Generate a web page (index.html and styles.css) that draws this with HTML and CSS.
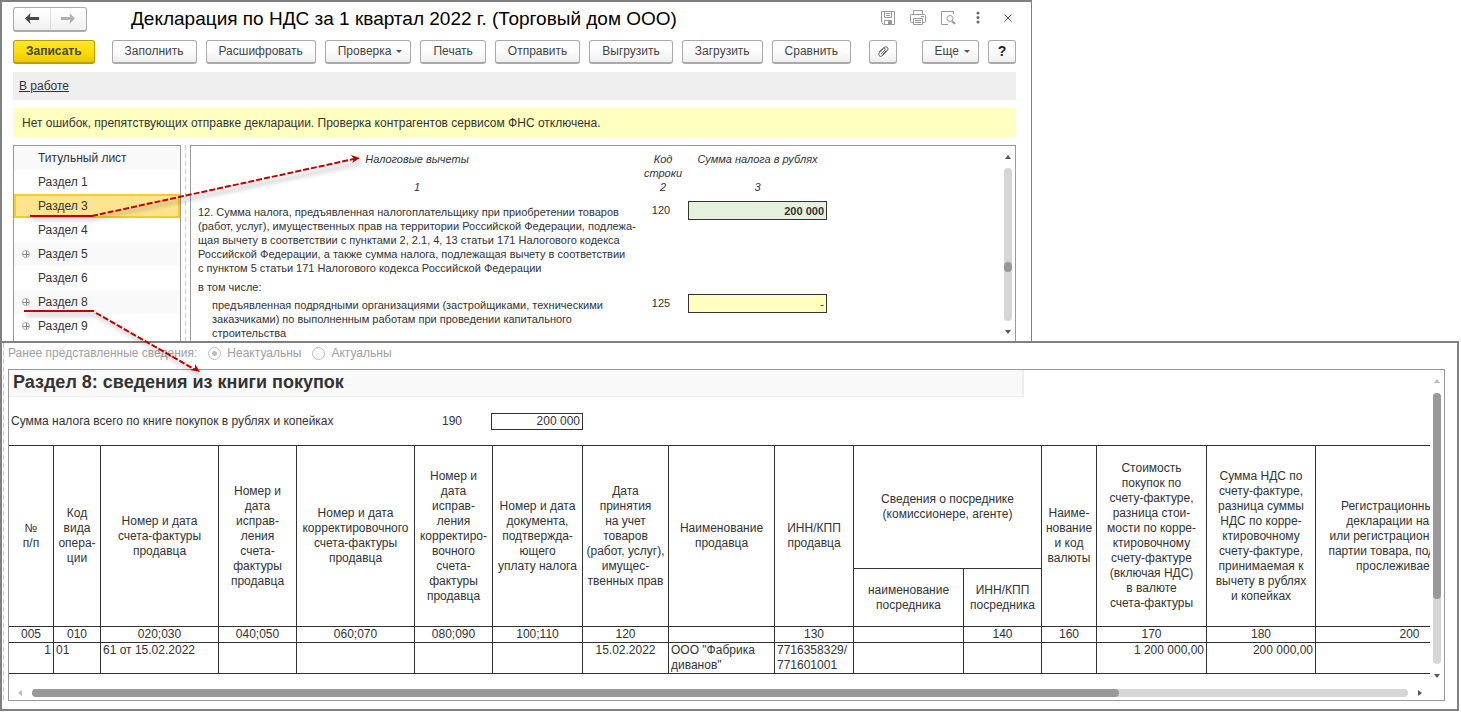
FILE: index.html
```html
<!DOCTYPE html>
<html lang="ru">
<head>
<meta charset="utf-8">
<title>Декларация по НДС</title>
<link rel="stylesheet" href="styles.css">
</head>
<body>
<main class="stage">
<section class="window declaration">
  <header class="titlebar">
    <div class="history">
      <button type="button" aria-label="Назад"><svg width="14" height="11" viewBox="0 0 14 11"><path d="M0 5.500 5.500 0 4.800 4H14v3H4.800l.7 4z" fill="#4a4a4a"/></svg></button>
      <button type="button" aria-label="Вперед"><svg width="14" height="11" viewBox="0 0 14 11"><path d="M14 5.500 8.500 0l.7 4H0v3h9.200l-.7 4z" fill="#b0b0b0"/></svg></button>
    </div>
    <h1>Декларация по НДС за 1 квартал 2022 г. (Торговый дом ООО)</h1>
    <div class="tools">
      <button type="button" aria-label="Сохранить"><svg width="16" height="16" viewBox="0 0 16 16" fill="none" stroke="#999"><path d="M1.500 1.500h13v13h-11l-2-2zM4.500 1.500v6h7v-6M6 3.500h4M6 5.500h4M4.500 14.500v-4h7v4"/><path d="M8 11h3v3H8z" fill="#999" stroke="none"/></svg></button>
      <button type="button" aria-label="Печать"><svg width="16" height="16" viewBox="0 0 16 16" fill="none" stroke="#999"><path d="M3.500 4.500v-4h9v4M3.500 12.500h-2q-1 0-1-1v-6q0-1 1-1h13q1 0 1 1v6q0 1-1 1h-2M3.500 8.500h9v6h-9zM5 10.500h6M5 12.500h6M11 6.500h3"/></svg></button>
      <button type="button" aria-label="Предварительный просмотр"><svg width="16" height="16" viewBox="0 0 16 16" fill="none" stroke="#999"><path d="M13.500 4V1.500h-12v13H8"/><circle cx="10" cy="8.500" r="3"/><path d="m12 11 3 3" stroke-width="2"/></svg></button>
      <button type="button" aria-label="Меню"><svg width="16" height="16" viewBox="0 0 16 16" fill="#666"><circle cx="8" cy="3" r="1.500"/><circle cx="8" cy="7.500" r="1.500"/><circle cx="8" cy="12" r="1.500"/></svg></button>
      <button type="button" aria-label="Закрыть"><svg width="16" height="16" viewBox="0 0 16 16" fill="none" stroke="#555"><path d="m4.500 4.500 7 7m0-7-7 7"/></svg></button>
    </div>
  </header>
  <div class="toolbar">
    <button type="button" class="btn primary">Записать</button>
    <button type="button" class="btn">Заполнить</button>
    <button type="button" class="btn">Расшифровать</button>
    <button type="button" class="btn menu">Проверка<span class="caret"></span></button>
    <button type="button" class="btn">Печать</button>
    <button type="button" class="btn">Отправить</button>
    <button type="button" class="btn">Выгрузить</button>
    <button type="button" class="btn">Загрузить</button>
    <button type="button" class="btn">Сравнить</button>
    <button type="button" class="btn square attach" aria-label="Файлы"><svg width="12" height="12" viewBox="0 0 12 12" fill="none" stroke="#666"><path d="m4 8 4-4q1-1 0-1.500t-1.500 0L2.500 6.500q-1.500 1.500-.5 3t3 .5L10 5q2-2 .5-3.500T7 1.500L2 6M5.500 8.500l4-4"/></svg></button>
    <button type="button" class="btn menu more">Еще<span class="caret"></span></button>
    <button type="button" class="btn square help">?</button>
  </div>
  <div class="status"><a href="#">В работе</a></div>
  <div class="notice">Нет ошибок, препятствующих отправке декларации. Проверка контрагентов сервисом ФНС отключена.</div>
  <div class="workspace">
    <nav class="sections">
      <ul>
        <li>Титульный лист</li>
        <li>Раздел 1</li>
        <li class="current">Раздел 3</li>
        <li>Раздел 4</li>
        <li class="group">Раздел 5</li>
        <li>Раздел 6</li>
        <li class="group">Раздел 8</li>
        <li class="group">Раздел 9</li>
      </ul>
    </nav>
    <div class="splitter"></div>
    <div class="sheet">
      <table class="deductions">
        <colgroup><col class="d-name"><col class="d-code"><col class="d-sum"></colgroup>
        <thead>
          <tr><th>Налоговые вычеты</th><th>Код<br>строки</th><th>Сумма налога в рублях</th></tr>
          <tr class="numbers"><th>1</th><th>2</th><th>3</th></tr>
        </thead>
        <tbody>
          <tr><td class="desc">12. Сумма налога, предъявленная налогоплательщику при приобретении товаров<br>(работ, услуг), имущественных прав на территории Российской Федерации, подлежа-<br>щая вычету в соответствии с пунктами 2, 2.1, 4, 13 статьи 171 Налогового кодекса<br>Российской Федерации, а также сумма налога, подлежащая вычету в соответствии<br>с пунктом 5 статьи 171 Налогового кодекса Российской Федерации</td><td class="code">120</td><td><input class="amount total" value="200 000" aria-label="Сумма по строке 120"></td></tr>
          <tr class="including"><td class="desc">в том числе:</td><td></td><td></td></tr>
          <tr><td class="desc nested">предъявленная подрядными организациями (застройщиками, техническими<br>заказчиками) по выполненным работам при проведении капитального<br>строительства</td><td class="code">125</td><td><input class="amount" value="-" aria-label="Сумма по строке 125"></td></tr>
        </tbody>
      </table>
      <div class="vbar"><i class="up"></i><div class="track"><div class="thumb middle"></div></div><i class="down"></i></div>
    </div>
  </div>
</section>

<section class="window purchases">
  <div class="splitter"></div>
  <div class="content">
    <div class="relevance" role="radiogroup">
      <span>Ранее представленные сведения:</span>
      <label><input type="radio" name="rel" checked disabled>Неактуальны</label>
      <label><input type="radio" name="rel" disabled>Актуальны</label>
    </div>
    <div class="book">
      <div class="view">
        <h2>Раздел 8: сведения из книги покупок</h2>
        <div class="summary">
          <label for="total">Сумма налога всего по книге покупок в рублях и копейках</label>
          <span>190</span>
          <input id="total" value="200 000">
        </div>
        <table class="ledger">
          <colgroup><col class="w45"><col class="w47"><col class="w118"><col class="w78"><col class="w118"><col class="w78"><col class="w90"><col class="w86"><col class="w106"><col class="w79"><col class="w110"><col class="w78"><col class="w55"><col class="w110"><col class="w109"><col class="w188"></colgroup>
          <thead>
            <tr class="main">
              <th rowspan="2">№<br>п/п</th>
              <th rowspan="2">Код<br>вида<br>опера-<br>ции</th>
              <th rowspan="2">Номер и дата<br>счета-фактуры<br>продавца</th>
              <th rowspan="2">Номер и<br>дата<br>исправ-<br>ления<br>счета-<br>фактуры<br>продавца</th>
              <th rowspan="2">Номер и дата<br>корректировочного<br>счета-фактуры<br>продавца</th>
              <th rowspan="2">Номер и<br>дата<br>исправ-<br>ления<br>корректиро-<br>вочного<br>счета-<br>фактуры<br>продавца</th>
              <th rowspan="2">Номер и дата<br>документа,<br>подтвержда-<br>ющего<br>уплату налога</th>
              <th rowspan="2">Дата<br>принятия<br>на учет<br>товаров<br>(работ, услуг),<br>имущес-<br>твенных прав</th>
              <th rowspan="2">Наименование<br>продавца</th>
              <th rowspan="2">ИНН/КПП<br>продавца</th>
              <th colspan="2">Сведения о посреднике<br>(комиссионере, агенте)</th>
              <th rowspan="2">Наиме-<br>нование<br>и код<br>валюты</th>
              <th rowspan="2">Стоимость<br>покупок по<br>счету-фактуре,<br>разница стои-<br>мости по корре-<br>ктировочному<br>счету-фактуре<br>(включая НДС)<br>в валюте<br>счета-фактуры</th>
              <th rowspan="2">Сумма НДС по<br>счету-фактуре,<br>разница суммы<br>НДС по корре-<br>ктировочному<br>счету-фактуре,<br>принимаемая к<br>вычету в рублях<br>и копейках</th>
              <th rowspan="2">Регистрационный номер<br>декларации на товары<br>или регистрационный номер<br>партии товара, подлежащего<br>прослеживаемости</th>
            </tr>
            <tr class="sub"><th>наименование<br>посредника</th><th>ИНН/КПП<br>посредника</th></tr>
            <tr class="codes"><th>005</th><th>010</th><th>020;030</th><th>040;050</th><th>060;070</th><th>080;090</th><th>100;110</th><th>120</th><th></th><th>130</th><th></th><th>140</th><th>160</th><th>170</th><th>180</th><th>200</th></tr>
          </thead>
          <tbody>
            <tr><td class="num">1</td><td>01</td><td>61 от 15.02.2022</td><td></td><td></td><td></td><td></td><td class="mid">15.02.2022</td><td>ООО "Фабрика<br>диванов"</td><td>7716358329/<br>771601001</td><td></td><td></td><td></td><td class="num">1 200 000,00</td><td class="num">200 000,00</td><td></td></tr>
          </tbody>
        </table>
      </div>
      <div class="vbar"><i class="up off"></i><div class="track"><div class="thumb tall"></div></div><i class="down"></i></div>
      <div class="hbar"><i class="left off"></i><div class="track"><div class="thumb wide"></div></div><i class="right"></i></div>
    </div>
  </div>
</section>

<svg class="callouts" width="400" height="400" viewBox="0 0 400 400" fill="none" aria-hidden="true">
  <g class="shadow"><path d="M32 219h62L362 163M26 315h70l104 60"/></g>
  <g stroke="#c00000" stroke-width="2">
    <path d="M30 216h62M24 311h70"/>
    <path d="M92 216 354 159M96 313l98 56" stroke-dasharray="6 2"/>
  </g>
  <path d="m360 158-9-3 3 4-2 4zM200 372l-5-8v4l-5 2z" fill="#c00000"/>
</svg>
</main>
</body>
</html>
```
FILE: styles.css
```css
*, ::before { box-sizing: border-box; }
body { margin: 0; background: #fff; color: #333; font: 12px/15px "Liberation Sans", Arial, sans-serif; }
button, input { font: inherit; color: inherit; margin: 0; }
h1, h2, ul { margin: 0; padding: 0; }
th { font-weight: normal; }
.stage { position: relative; padding-right: 2px; }
.window { border: 2px solid #808080; background: #fff; }

.declaration { margin-right: 427px; border-right-width: 1px; border-bottom: 0; padding: 4px 15px 0 11px; }
.titlebar { display: flex; align-items: center; height: 26px; }
.history { display: flex; width: 74px; height: 25px; border: 1px solid #aaa; border-bottom: 2px solid #aaa; border-radius: 3px; background: linear-gradient(#fff, #f0f0f0); }
.history button { flex: 1; display: grid; place-items: center; border: 0; padding: 0; background: none; }
.history button + button { border-left: 1px solid #ddd; }
h1 { flex: 1; padding-left: 44px; color: #000; font-size: 19px; line-height: 24px; font-weight: normal; white-space: nowrap; }
.tools { display: flex; gap: 14px; }
.tools button { border: 0; padding: 0; background: none; width: 16px; height: 18px; display: grid; }

.toolbar { display: flex; gap: 9px; margin-top: 8px; }
.btn { height: 24px; padding: 0 12px; color: #444; border: 1px solid #aaa; border-bottom: 2px solid #aaa; border-radius: 3px; background: linear-gradient(#fff 40%, #eee); display: flex; align-items: center; justify-content: center; white-space: nowrap; }
.primary { padding: 0 12px; font-weight: bold; margin-right: 8px; border-color: #b89c00; background: linear-gradient(#ffe536, #ffdf00 50%, #e9c900); }
.menu { padding: 0 8px 0 12px; }
.square { width: 28px; padding: 0; }
.attach { margin-left: 9px; }
.more { margin-left: auto; }
.help { font-weight: bold; color: #222; font-size: 14px; }
.caret { margin-left: 5px; border: 3px solid transparent; border-top-color: #555; border-bottom: 0; }

.status { height: 28px; margin-top: 8px; padding: 7px 6px; background: #efefef; }
.status a { color: #333; }
.notice { height: 29px; margin-top: 8px; padding: 8px 9px; background: #ffffc0; white-space: nowrap; overflow: hidden; }

.workspace { display: flex; margin-top: 8px; }
.sections { width: 168px; border: 1px solid #999; border-bottom: 0; padding-bottom: 3px; }
.sections ul { list-style: none; }
.sections li { display: flex; align-items: center; height: 24px; padding-left: 24px; background: #fff; }
.sections li:nth-child(odd) { background: #f9f9f9; }
.sections .group { padding-left: 8px; }
.group::before { content: ""; width: 8px; height: 8px; margin-right: 8px; border: 1px solid #aaa; border-radius: 50%; background: linear-gradient(#888, #888) center / 6px 1px no-repeat, linear-gradient(#888, #888) center / 1px 6px no-repeat; }
.sections li.current { padding-left: 22px; border: 2px solid #ffc91e; background: #ffe48f; }
.splitter { width: 1px; background: repeating-linear-gradient(#ccc 0 5px, transparent 5px 8px); }
.declaration .splitter { margin: 0 4px; }
.sheet { flex: 1; display: flex; justify-content: space-between; border: 1px solid #999; border-bottom: 0; font-size: 11px; line-height: 14px; }

.deductions { width: 636px; table-layout: fixed; border-spacing: 0; margin-top: 6px; }
.deductions th { font-style: italic; padding: 0; vertical-align: top; }
.deductions th:last-child { padding-left: 5px; }
.deductions .numbers th { height: 21px; }
.deductions td { padding: 0; vertical-align: top; }
.deductions .desc { padding: 4px 0 0 7px; white-space: nowrap; }
.deductions .nested { padding-left: 21px; }
.deductions .code { padding-top: 2px; padding-right: 4px; text-align: center; }
.d-name { width: 452px; }
.d-code { width: 40px; }
.d-sum { width: 144px; }
.amount { display: block; width: 139px; height: 19px; margin-left: 5px; padding: 0 2px; border: 1px solid #333; border-radius: 0; background: #ffffc0; text-align: right; }
.total { background: #e7f0dd; font-weight: bold; }

.vbar { display: flex; flex-direction: column; align-items: center; gap: 9px; width: 8px; }
.track { flex: 1; background: #d6d6d6; border-radius: 4px; }
.vbar .track { width: 8px; }
.thumb { background: #999; border-radius: 4px; }
.vbar i, .hbar i { width: 0; height: 0; border: 3px solid transparent; }
.vbar .up { border-top: 0; border-bottom: 4px solid #555; }
.vbar .down { border-bottom: 0; border-top: 4px solid #555; }
.vbar .up.off { border-bottom-color: #bbb; }
.sheet .vbar { margin: 9px 3px 7px 0; }
.middle { height: 10px; margin-top: 94px; }
.tall { height: 76%; }

.purchases { display: flex; gap: 4px; padding: 0 12px 8px 1px; }
.content { flex: 1; min-width: 0; }
.relevance { display: flex; gap: 11px; height: 26px; padding-top: 3px; color: #a0a0a0; }
.relevance label { display: flex; gap: 6px; height: 15px; align-items: center; }
.relevance input { appearance: none; width: 13px; height: 13px; border: 1px solid #bbb; border-radius: 50%; }
.relevance input:checked { background: radial-gradient(#bbb 2px, transparent 3px); }
.book { display: grid; grid-template-columns: minmax(0, 1fr) 8px; column-gap: 3px; padding-right: 3px; border: 1px solid #999; }
.view { overflow: hidden; min-width: 0; }
h2 { width: 1015px; height: 27px; padding: 0 4px; border: 1px solid #eee; border-width: 0 2px 1px 0; background: #f9f9f9; font-size: 18px; line-height: 24px; }
.summary { display: flex; align-items: center; height: 48px; padding-left: 2px; }
.summary label { width: 431px; }
.summary span { width: 49px; }
.summary input { width: 92px; height: 17px; padding: 0 2px; border: 1px solid #333; border-radius: 0; text-align: right; }

.ledger { width: 1495px; table-layout: fixed; border-spacing: 0; border-top: 1px solid #333; white-space: nowrap; }
.ledger th, .ledger td { padding: 0; border: 1px solid #333; border-width: 0 1px 1px 0; }
.ledger td { height: 31px; padding: 0 2px; vertical-align: top; }
.main { height: 123px; }
.sub { height: 58px; }
.codes th { height: 16px; }
.ledger .num { text-align: right; }
.ledger .mid { text-align: center; }
.w45 { width: 45px; }
.w47 { width: 47px; }
.w55 { width: 55px; }
.w78 { width: 78px; }
.w79 { width: 79px; }
.w86 { width: 86px; }
.w90 { width: 90px; }
.w106 { width: 106px; }
.w109 { width: 109px; }
.w110 { width: 110px; }
.w118 { width: 118px; }
.w188 { width: 188px; }
.book .vbar { margin-top: 9px; gap: 10px; margin-bottom: -4px; }
.hbar { display: flex; align-items: center; gap: 10px; height: 8px; margin: 15px 8px 3px 9px; }
.hbar .track { height: 8px; }
.wide { width: 79%; height: 8px; }
.hbar .left { border-left: 0; border-right: 4px solid #555; }
.hbar .right { border-right: 0; border-left: 4px solid #555; }
.hbar .left.off { border-right-color: #bbb; }

.callouts { position: absolute; left: 0; top: 0; pointer-events: none; }
.shadow { stroke: #000; stroke-width: 3px; opacity: .2; filter: blur(2px); }
```
